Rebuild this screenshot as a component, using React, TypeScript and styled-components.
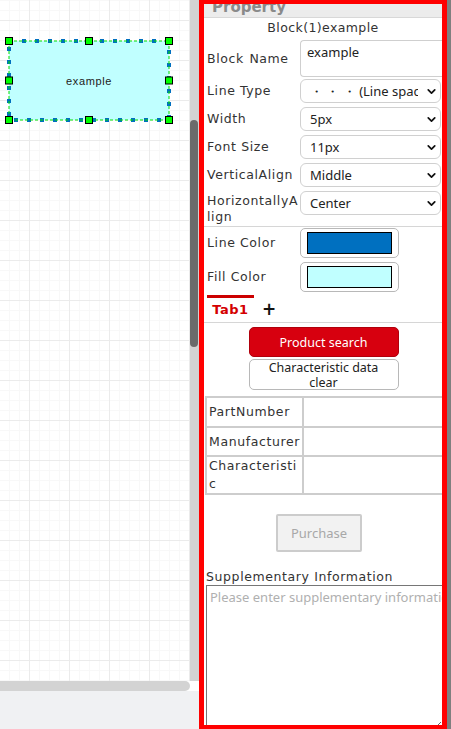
import React from 'react';
import styled, { createGlobalStyle } from 'styled-components';
import { ChevronDown } from 'lucide-react';

// 페이지 기본 스타일
const GlobalStyle = createGlobalStyle`
    html, body {
        margin: 0;
        padding: 0;
        background: #ffffff;
        overflow: hidden;
    }
    body {
        font-family: "DejaVu Sans", "Noto Sans CJK JP", sans-serif;
        color: #333;
    }
`;

interface SelectRow {
    label: React.ReactNode;
    value: string;
    twoLine?: boolean;
}

const selectRows: SelectRow[] = [
    { label: 'Line Type', value: '・ ・ ・   (Line spacing)' },
    { label: 'Width', value: '5px' },
    { label: 'Font Size', value: '11px' },
    { label: 'VerticalAlign', value: 'Middle' },
    {
        label: (
            <>
                HorizontallyA
                <br />
                lign
            </>
        ),
        value: 'Center',
        twoLine: true,
    },
];

const colorRows = [
    { label: 'Line Color', color: '#0070c0' },
    { label: 'Fill Color', color: '#c0ffff' },
];

// 블록 선택 핸들 위치 (캔버스 위 노드 기준)
const handles = [
    [0, 0], [80, 0], [160, 0],
    [0, 39.5], [160, 39.5],
    [0, 79], [80, 79], [160, 79],
];

const BlockNode: React.FC = () => (
    <Node>
        <svg width="172" height="91" viewBox="-6 -6 172 91">
            <rect x="0" y="0" width="160" height="79" fill="#c0ffff" />
            <rect
                x="0"
                y="0"
                width="160"
                height="79"
                fill="none"
                stroke="#0070c0"
                strokeWidth="4"
                strokeDasharray="4 9"
            />
            <rect
                x="0"
                y="0"
                width="160"
                height="79"
                fill="none"
                stroke="#00e000"
                strokeWidth="1"
                strokeDasharray="3 2"
            />
            {handles.map(([hx, hy], i) => (
                <rect
                    key={i}
                    x={hx - 3.5}
                    y={hy - 3.5}
                    width="7"
                    height="7"
                    fill="#00ff00"
                    stroke="#000"
                    strokeWidth="1"
                />
            ))}
        </svg>
        <NodeText>example</NodeText>
    </Node>
);

export default function App() {
    return (
        <>
            <GlobalStyle />
            <Screen>
                <Workspace>
                    <CanvasRow>
                        <Canvas>
                            <BlockNode />
                        </Canvas>
                        <VScroll>
                            <VThumb />
                        </VScroll>
                    </CanvasRow>
                    <HScrollRow>
                        <HThumb />
                        <ScrollCorner />
                    </HScrollRow>
                    <Footer />
                </Workspace>

                <Panel>
                    <PanelInner>
                        <PanelHeader>
                            <span>Property</span>
                            <ChevronDown size={14} strokeWidth={3} color="#999" />
                        </PanelHeader>
                        <BlockTitle>Block(1)example</BlockTitle>

                        <FieldRow $h={37} $gap={2}>
                            <Label $wide>Block Name</Label>
                            <NameInput defaultValue="example" />
                        </FieldRow>

                        {selectRows.map((row) => (
                            <FieldRow key={row.value} $h={24} $gap={4}>
                                <Label $wrap={row.twoLine}>{row.label}</Label>
                                <SelectWrap>
                                    <Select defaultValue={row.value}>
                                        <option value={row.value}>{row.value}</option>
                                    </Select>
                                    <SelectArrow>
                                        <ChevronDown size={13} strokeWidth={3.2} color="#111" />
                                    </SelectArrow>
                                </SelectWrap>
                            </FieldRow>
                        ))}

                        <Divider $top={11} />

                        {colorRows.map((row, i) => (
                            <FieldRow key={row.label} $h={30} $gap={4} $top={i === 0 ? 1 : 0}>
                                <Label>{row.label}</Label>
                                <ColorBox>
                                    <Swatch $color={row.color} />
                                </ColorBox>
                            </FieldRow>
                        ))}

                        <Tabs>
                            <Tab>Tab1</Tab>
                            <AddTab>+</AddTab>
                        </Tabs>
                        <Divider $top={0} />

                        <ButtonStack>
                            <RedButton>Product search</RedButton>
                            <PlainButton>
                                Characteristic data
                                <br />
                                clear
                            </PlainButton>
                        </ButtonStack>

                        <SpecTable>
                            <tbody>
                                <tr style={{ height: 30 }}>
                                    <th>PartNumber</th>
                                    <td />
                                </tr>
                                <tr style={{ height: 29 }}>
                                    <th>Manufacturer</th>
                                    <td />
                                </tr>
                                <tr style={{ height: 38 }}>
                                    <th>
                                        Characteristi
                                        <br />c
                                    </th>
                                    <td />
                                </tr>
                            </tbody>
                        </SpecTable>

                        <PurchaseRow>
                            <PurchaseButton disabled>Purchase</PurchaseButton>
                        </PurchaseRow>

                        <SuppLabel>Supplementary Information</SuppLabel>
                        <SuppArea placeholder="Please enter supplementary information" />
                    </PanelInner>
                </Panel>
                <EdgeStrip />
            </Screen>
        </>
    );
}

// ===== 레이아웃 =====

const Screen = styled.div`
    display: flex;
    width: 451px;
    height: 729px;
    overflow: hidden;
`;

const Workspace = styled.div`
    width: 199px;
    display: flex;
    flex-direction: column;
    flex-shrink: 0;
`;

const CanvasRow = styled.div`
    display: flex;
    height: 681px;
`;

const Canvas = styled.div`
    position: relative;
    width: 190px;
    background-color: #fff;
    background-image:
        linear-gradient(to right, #ebebeb 1px, transparent 1px),
        linear-gradient(to bottom, #ebebeb 1px, transparent 1px),
        linear-gradient(to right, #f8f8f8 1px, transparent 1px),
        linear-gradient(to bottom, #f8f8f8 1px, transparent 1px);
    background-size: 40px 40px, 40px 40px, 10px 10px, 10px 10px;
    background-position: 29px 20px, 29px 20px, 9px 0px, 0px 10px;
`;

const Node = styled.div`
    position: absolute;
    left: 3px;
    top: 35px;
    width: 172px;
    height: 91px;

    svg {
        display: block;
    }
`;

const NodeText = styled.div`
    position: absolute;
    inset: 0;
    display: flex;
    align-items: center;
    justify-content: center;
    font-family: "Liberation Sans", Arial, sans-serif;
    font-size: 11px;
    letter-spacing: 0.6px;
    color: #222;
`;

const VScroll = styled.div`
    width: 9px;
    background: #d3d3d3;
    padding-top: 120px;
`;

const VThumb = styled.div`
    width: 8px;
    height: 227px;
    background: #6b6b6b;
    border-radius: 4px;
`;

const HScrollRow = styled.div`
    display: flex;
    height: 10px;
`;

const HThumb = styled.div`
    width: 190px;
    background: #d3d3d3;
    border-radius: 0 5px 5px 0;
`;

const ScrollCorner = styled.div`
    flex: 1;
    background: #fff;
`;

const Footer = styled.div`
    flex: 1;
    background: #f0f1f3;
`;

const Panel = styled.div`
    width: 238px;
    height: 725px;
    border: 5px solid #ff0000;
    border-top: none;
    border-bottom-width: 4px;
    box-sizing: content-box;
    overflow: hidden;
    position: relative;
    background: #fff;

    &::before {
        content: '';
        position: absolute;
        top: 0;
        left: 0;
        right: 0;
        height: 4px;
        background: #ff0000;
        z-index: 2;
    }
`;

const EdgeStrip = styled.div`
    width: 4px;
    background: #7f7f7f;
`;

const PanelInner = styled.div`
    margin-top: -8px;
    width: 238px;
`;

const PanelHeader = styled.div`
    height: 26px;
    background: #ececec;
    border-bottom: 1px solid #d8d8d8;
    display: flex;
    align-items: center;
    justify-content: space-between;
    padding: 0 14px 0 8px;
    box-sizing: border-box;

    span {
        font-family: "DejaVu Sans", sans-serif;
        font-weight: bold;
        font-size: 15px;
        color: #8a8a8a;
        margin-top: 4px;
    }

    svg {
        margin-top: -10px;
    }
`;

const BlockTitle = styled.div`
    text-align: center;
    font-size: 12.5px;
    letter-spacing: 0.4px;
    color: #333;
    height: 22px;
    line-height: 20px;
`;

const FieldRow = styled.div<{ $h: number; $gap: number; $top?: number }>`
    display: flex;
    align-items: center;
    height: ${(p) => p.$h}px;
    margin-top: ${(p) => p.$top ?? 0}px;
    margin-bottom: ${(p) => p.$gap}px;
`;

const Label = styled.div<{ $wrap?: boolean; $wide?: boolean }>`
    width: 93px;
    padding-left: 3px;
    flex-shrink: 0;
    align-self: ${(p) => (p.$wrap ? 'flex-start' : 'center')};
    height: ${(p) => (p.$wrap ? '24px' : 'auto')};
    font-size: 12.5px;
    letter-spacing: 0.6px;
    word-spacing: ${(p) => (p.$wide ? '1px' : 'normal')};
    color: #333;
    line-height: 16px;
    white-space: nowrap;
    margin-top: ${(p) => (p.$wrap ? '2px' : '0')};
`;

const NameInput = styled.textarea`
    width: 150px;
    height: 37px;
    box-sizing: border-box;
    border: 1px solid #cfcfcf;
    border-right: none;
    border-radius: 4px 0 0 4px;
    padding: 2px 6px;
    resize: none;
    font-family: "Noto Sans", "DejaVu Sans", sans-serif;
    font-size: 13px;
    color: #222;
    outline: none;
`;

const SelectWrap = styled.div`
    position: relative;
    width: 141px;
    height: 24px;
`;

const Select = styled.select`
    appearance: none;
    width: 100%;
    height: 100%;
    box-sizing: border-box;
    border: 1px solid #d0d0d0;
    border-radius: 6px;
    background: #fff;
    padding: 0 22px 0 9px;
    font-family: "Noto Sans", "DejaVu Sans", sans-serif;
    font-size: 13px;
    color: #222;
    outline: none;
    overflow: hidden;
    white-space: nowrap;
`;

const SelectArrow = styled.span`
    position: absolute;
    right: 3px;
    top: 6px;
    pointer-events: none;
    display: flex;
`;

const Divider = styled.div<{ $top: number }>`
    height: 1px;
    background: #d6d6d6;
    margin-top: ${(p) => p.$top}px;
`;

const ColorBox = styled.div`
    width: 99px;
    height: 30px;
    box-sizing: border-box;
    border: 1px solid #b8b8b8;
    border-radius: 5px;
    padding: 3px 6px;
    display: flex;
`;

const Swatch = styled.div<{ $color: string }>`
    flex: 1;
    background: ${(p) => p.$color};
    border: 1px solid #000;
`;

const Tabs = styled.div`
    display: flex;
    align-items: center;
    height: 27px;
    margin-top: -1px;
`;

const Tab = styled.div`
    margin-left: 3px;
    width: 47px;
    box-sizing: border-box;
    border-top: 3px solid #cc0000;
    text-align: center;
    font-family: "DejaVu Sans", sans-serif;
    font-weight: bold;
    font-size: 13px;
    letter-spacing: 0.5px;
    color: #d40000;
    height: 27px;
    line-height: 24px;
`;

const AddTab = styled.div`
    margin-left: 8px;
    font-family: "DejaVu Sans", sans-serif;
    font-weight: bold;
    font-size: 17px;
    color: #111;
    line-height: 24px;
`;

const ButtonStack = styled.div`
    display: flex;
    flex-direction: column;
    align-items: center;
    padding-top: 4px;
    padding-left: 1px;
    gap: 2px;
`;

const BaseButton = styled.button`
    width: 150px;
    box-sizing: border-box;
    border-radius: 5px;
    font-family: "Noto Sans", "DejaVu Sans", sans-serif;
    font-size: 12.5px;
    cursor: pointer;
    padding: 0;
`;

const RedButton = styled(BaseButton)`
    height: 30px;
    background: #d7000f;
    color: #fff;
    border: 1px solid #b0000c;
`;

const PlainButton = styled(BaseButton)`
    height: 31px;
    background: #fff;
    color: #222;
    border: 1px solid #b8b8b8;
    line-height: 15px;
`;

const SpecTable = styled.table`
    margin-top: 6px;
    margin-left: 1px;
    width: 250px;
    border-collapse: collapse;

    th,
    td {
        border: 2px solid #cdcdcd;
        padding: 0 2px;
    }

    th {
        width: 90px;
        text-align: left;
        font-weight: normal;
        font-size: 12.5px;
        letter-spacing: 0.6px;
        line-height: 18px;
        color: #333;
    }
`;

const PurchaseRow = styled.div`
    display: flex;
    justify-content: center;
    padding: 19px 8px 0 0;
`;

const PurchaseButton = styled.button`
    width: 86px;
    height: 38px;
    background: #f2f2f2;
    border: 2px solid #cccccc;
    border-radius: 2px;
    font-family: "Noto Sans", "DejaVu Sans", sans-serif;
    font-size: 13px;
    color: #a8a8a8;
`;

const SuppLabel = styled.div`
    margin-top: 17px;
    padding-left: 2px;
    font-size: 12.5px;
    letter-spacing: 0.6px;
    color: #333;
    line-height: 16px;
`;

const SuppArea = styled.textarea`
    display: block;
    margin-left: 2px;
    width: 237px;
    height: 146px;
    box-sizing: border-box;
    border: 1px solid #767676;
    padding: 2px 3px;
    font-family: "Noto Sans", "DejaVu Sans", sans-serif;
    font-size: 13px;
    white-space: nowrap;
    overflow: hidden;
    outline: none;

    &::placeholder {
        color: #b0b0b0;
    }
`;
